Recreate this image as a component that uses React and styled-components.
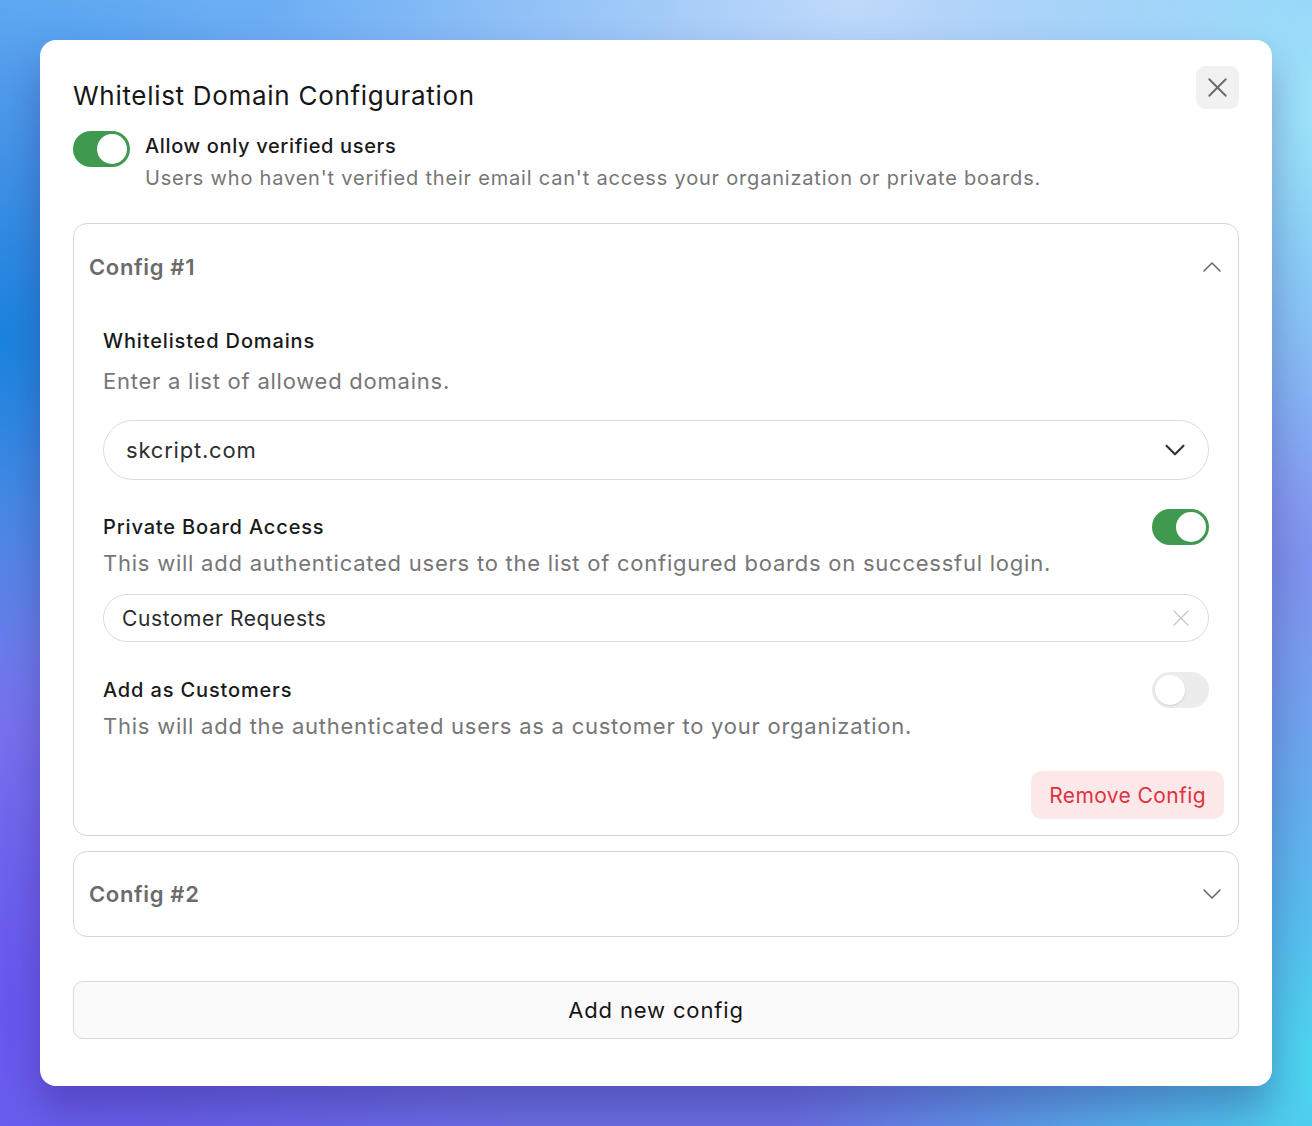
import React from 'react';
import styled, { createGlobalStyle } from 'styled-components';
import { X, ChevronUp, ChevronDown } from 'lucide-react';

const GlobalStyle = createGlobalStyle`
  html, body {
    margin: 0;
    padding: 0;
  }
  body {
    font-family: Inter, "Noto Sans", sans-serif;
    -webkit-font-smoothing: antialiased;
  }
  * {
    box-sizing: border-box;
  }
`;

const Page = styled.div`
  width: 1312px;
  height: 1126px;
  padding: 40px;
  background:
    radial-gradient(ellipse 45% 30% at 65% 0%, rgba(196, 220, 250, 0.95), rgba(196, 220, 250, 0) 100%),
    radial-gradient(ellipse 35% 40% at 100% 10%, rgba(150, 230, 250, 1), rgba(150, 230, 250, 0) 100%),
    radial-gradient(ellipse 40% 50% at 100% 95%, rgba(76, 216, 240, 1), rgba(76, 216, 240, 0) 100%),
    radial-gradient(ellipse 30% 35% at 0% 30%, rgba(25, 132, 222, 1), rgba(25, 132, 222, 0) 100%),
    radial-gradient(ellipse 40% 45% at 0% 90%, rgba(104, 88, 240, 1), rgba(104, 88, 240, 0) 100%),
    linear-gradient(180deg, #6aaef4 0%, #8a86ee 60%, #6c70e6 100%);
`;

const Modal = styled.div`
  background: #ffffff;
  border-radius: 16px;
  padding: 26px 33px 47px;
  box-shadow: 0 24px 40px rgba(40, 30, 110, 0.35);
`;

const Header = styled.div`
  display: flex;
  justify-content: space-between;
  align-items: flex-start;
`;

const Title = styled.h2`
  margin: 14px 0 0;
  font-size: 26px;
  line-height: 32px;
  font-weight: 400;
  letter-spacing: 0.7px;
  color: #161616;
`;

const CloseButton = styled.button`
  width: 43px;
  height: 43px;
  border: none;
  border-radius: 9px;
  background: #f1f1f1;
  color: #6a6a6a;
  display: flex;
  align-items: center;
  justify-content: center;
  padding: 0;
  cursor: pointer;
`;

const Switch = styled.div`
  flex: none;
  width: 57px;
  height: 36px;
  border-radius: 18px;
  padding: 3px;
  background: ${p => (p.$on ? '#3f9a4f' : '#ececec')};
  display: flex;
  justify-content: ${p => (p.$on ? 'flex-end' : 'flex-start')};
  &::after {
    content: '';
    width: 30px;
    height: 30px;
    border-radius: 50%;
    background: #fff;
    box-shadow: ${p => (p.$on ? 'none' : '0 1px 2px rgba(0,0,0,0.12)')};
  }
`;

const VerifiedRow = styled.div`
  display: flex;
  gap: 15px;
  margin-top: 19px;
`;

const VerifiedText = styled.div`
  display: flex;
  flex-direction: column;
  gap: 3px;
`;

const Label = styled.div`
  font-size: 20px;
  line-height: 30px;
  font-weight: 500;
  letter-spacing: ${p => (p.$wide ? 0.85 : 0.65)}px;
  color: #1a1a1a;
`;

const Hint = styled.div`
  font-size: ${p => (p.$big ? 22 : 20)}px;
  line-height: 28px;
  letter-spacing: ${p => (p.$big ? 0.76 : 0.8)}px;
  color: #767676;
  margin-top: ${p => p.$mt || 0}px;
`;

const Card = styled.div`
  border: 1px solid #d6d6d6;
  border-radius: 14px;
  margin-top: ${p => p.$mt}px;
`;

const CardHeader = styled.div`
  height: ${p => p.$h}px;
  padding: 0 10px 0 15px;
  display: flex;
  align-items: center;
  justify-content: space-between;
  color: #6a6a6a;
`;

const CardTitle = styled.div`
  font-size: 22px;
  font-weight: 600;
  letter-spacing: 0.65px;
  color: #6b6b6b;
`;

const CardBody = styled.div`
  padding: 17px 14px 16px 29px;
  display: flex;
  flex-direction: column;
`;

const Section = styled.div`
  padding-right: 15px;
  margin-top: ${p => p.$mt || 0}px;
`;

const SectionHead = styled.div`
  display: flex;
  align-items: center;
  justify-content: space-between;
  height: ${p => p.$h || 28}px;
`;

const SelectBox = styled.div`
  margin-top: 25px;
  height: 60px;
  border: 1px solid #dcdcdc;
  border-radius: 30px;
  padding: 0 16px 0 22px;
  display: flex;
  align-items: center;
  justify-content: space-between;
  font-size: 22px;
  letter-spacing: 0.8px;
  color: #2e2e2e;
`;

const TagInput = styled.div`
  margin-top: 17px;
  height: 48px;
  border: 1px solid #dcdcdc;
  border-radius: 24px;
  padding: 0 13px 0 18px;
  display: flex;
  align-items: center;
  justify-content: space-between;
  font-size: 21px;
  letter-spacing: 0.6px;
  color: #2a2a2a;
`;

const Actions = styled.div`
  display: flex;
  justify-content: flex-end;
  margin-top: 31px;
`;

const DangerButton = styled.button`
  height: 48px;
  padding: 0 18px;
  border: none;
  border-radius: 10px;
  background: #fde8e9;
  color: #dc3340;
  font-family: inherit;
  font-size: 21px;
  letter-spacing: 0.4px;
  cursor: pointer;
`;

const AddButton = styled.button`
  margin-top: 44px;
  width: 100%;
  height: 58px;
  border: 1px solid #dadada;
  border-radius: 10px;
  background: #fafafa;
  color: #161616;
  font-family: inherit;
  font-size: 22px;
  letter-spacing: 0.85px;
  cursor: pointer;
`;

const App = () => {
  return (
    <>
      <GlobalStyle />
      <Page>
        <Modal>
          <Header>
            <Title>Whitelist Domain Configuration</Title>
            <CloseButton>
              <X size={33} strokeWidth={1.4} />
            </CloseButton>
          </Header>

          <VerifiedRow>
            <Switch $on />
            <VerifiedText>
              <Label>Allow only verified users</Label>
              <Hint>Users who haven't verified their email can't access your organization or private boards.</Hint>
            </VerifiedText>
          </VerifiedRow>

          <Card $mt={31}>
            <CardHeader $h={86}>
              <CardTitle>Config #1</CardTitle>
              <ChevronUp size={32} strokeWidth={1.2} />
            </CardHeader>
            <CardBody>
              <Section>
                <SectionHead>
                  <Label $wide>Whitelisted Domains</Label>
                </SectionHead>
                <Hint $big $mt={12}>Enter a list of allowed domains.</Hint>
                <SelectBox>
                  <span>skcript.com</span>
                  <ChevronDown size={34} strokeWidth={1.5} color="#333" />
                </SelectBox>
              </Section>

              <Section $mt={29}>
                <SectionHead $h={36}>
                  <Label $wide>Private Board Access</Label>
                  <Switch $on />
                </SectionHead>
                <Hint $big $mt={4}>This will add authenticated users to the list of configured boards on successful login.</Hint>
                <TagInput>
                  <span>Customer Requests</span>
                  <X size={28} strokeWidth={1.2} color="#c6c6c6" />
                </TagInput>
              </Section>

              <Section $mt={30}>
                <SectionHead $h={36}>
                  <Label $wide>Add as Customers</Label>
                  <Switch />
                </SectionHead>
                <Hint $big $mt={4}>This will add the authenticated users as a customer to your organization.</Hint>
              </Section>

              <Actions>
                <DangerButton>Remove Config</DangerButton>
              </Actions>
            </CardBody>
          </Card>

          <Card $mt={15}>
            <CardHeader $h={84}>
              <CardTitle>Config #2</CardTitle>
              <ChevronDown size={32} strokeWidth={1.2} />
            </CardHeader>
          </Card>

          <AddButton>Add new config</AddButton>
        </Modal>
      </Page>
    </>
  );
};

export default App;
